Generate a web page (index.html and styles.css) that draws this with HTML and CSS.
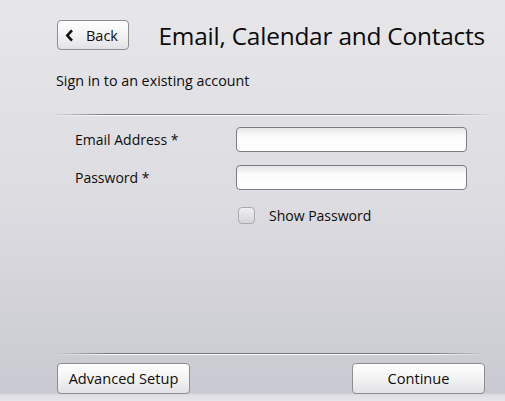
FILE: index.html
```html
<!DOCTYPE html>
<html>
<head>
<meta charset="utf-8">
<link rel="stylesheet" href="styles.css">
</head>
<body>
<div class="page">
  <header class="header">
    <button class="btn back-btn">
      <svg class="chev" width="9" height="13" viewBox="0 0 9 13"><path d="M7 1.3 L2.3 6.5 L7 11.7" fill="none" stroke="#111" stroke-width="2.6"/></svg>
      <span>Back</span>
    </button>
    <h1 class="title">Email, Calendar and Contacts</h1>
  </header>
  <p class="subtitle">Sign in to an existing account</p>
  <div class="sep"></div>
  <div class="form">
    <label class="label">Email Address *</label>
    <div class="input"></div>
    <label class="label">Password *</label>
    <div class="input"></div>
    <span></span>
    <div class="check-row">
      <span class="checkbox"></span>
      <span class="check-label">Show Password</span>
    </div>
  </div>
  <div class="spacer"></div>
  <div class="sep sep-bottom"></div>
  <footer class="footer">
    <button class="btn foot-btn">Advanced Setup</button>
    <button class="btn foot-btn">Continue</button>
  </footer>
</div>
</body>
</html>
```
FILE: styles.css
```css
* { box-sizing: border-box; }
html, body { margin: 0; padding: 0; }
body {
  font-family: "Open Sans", "Noto Sans", sans-serif;
  color: #0d0d0d;
}
.page {
  width: 505px;
  height: 401px;
  display: flex;
  flex-direction: column;
  background: linear-gradient(to bottom, #e7e7ea 0%, #dcdce1 50%, #c9c9d1 98%, #dedee3 98.5%, #e6e6ea 100%);
  padding: 20px 20px 0 56px;
}
.header {
  display: flex;
  align-items: center;
  height: 30px;
}
.btn {
  font-family: inherit;
  color: #0d0d0d;
  background: linear-gradient(to bottom, #ffffff 0%, #f3f3f4 50%, #e2e2e5 100%);
  border: 1px solid #8e8e92;
  border-radius: 4px;
  box-shadow: inset 0 1px 0 #fff;
  padding: 0;
  cursor: pointer;
}
.back-btn {
  width: 75px;
  height: 30px;
  margin-left: 1px;
  display: flex;
  align-items: center;
  font-size: 14.5px;
  padding-left: 7px;
}
.chev { margin-right: 12px; }
.title {
  margin: 0 0 0 29px;
  font-weight: 400;
  font-size: 24.4px;
  letter-spacing: -0.2px;
  color: #0a0a0a;
  white-space: nowrap;
}
.subtitle {
  margin: 22px 0 0 0;
  font-size: 14.3px;
  line-height: 18px;
}
.sep {
  height: 2px;
  margin: 24px 0 0 -4px;
  margin-right: -6px;
  background:
    linear-gradient(to right, rgba(120,120,124,0) 0%, #7a7a7e 12%, #7a7a7e 88%, rgba(120,120,124,0) 100%) top / 100% 1px no-repeat,
    linear-gradient(to right, rgba(255,255,255,0) 0%, rgba(255,255,255,0.9) 12%, rgba(255,255,255,0.9) 88%, rgba(255,255,255,0) 100%) bottom / 100% 1px no-repeat;
}
.form {
  display: grid;
  grid-template-columns: 161px 231px;
  grid-auto-rows: 25px;
  row-gap: 13px;
  margin: 11px 0 0 19px;
  align-items: center;
}
.label {
  font-size: 14px;
}
.input {
  height: 25px;
  border: 1px solid #7e7e82;
  border-radius: 4px;
  background: linear-gradient(to bottom, #e6e6e8 0%, #fbfbfb 35%, #ffffff 100%);
}
.check-row {
  display: flex;
  align-items: center;
  height: 18px;
  margin-top: 0;
}
.checkbox {
  width: 17px;
  height: 17px;
  margin-left: 2px;
  border: 1px solid #a9a9ae;
  border-radius: 4px;
  background: linear-gradient(to bottom, #f0f0f2 0%, #d6d6da 100%);
}
.check-label {
  margin-left: 14px;
  font-size: 14px;
}
.spacer { flex: 1; }
.sep-bottom { margin: 0 0 0 0; margin-right: 0; }
.footer {
  display: flex;
  justify-content: space-between;
  margin: 8px 0 0 1px;
  padding-bottom: 7px;
}
.foot-btn {
  width: 133px;
  height: 31px;
  font-size: 14.6px;
  padding-bottom: 2px;
}
```
